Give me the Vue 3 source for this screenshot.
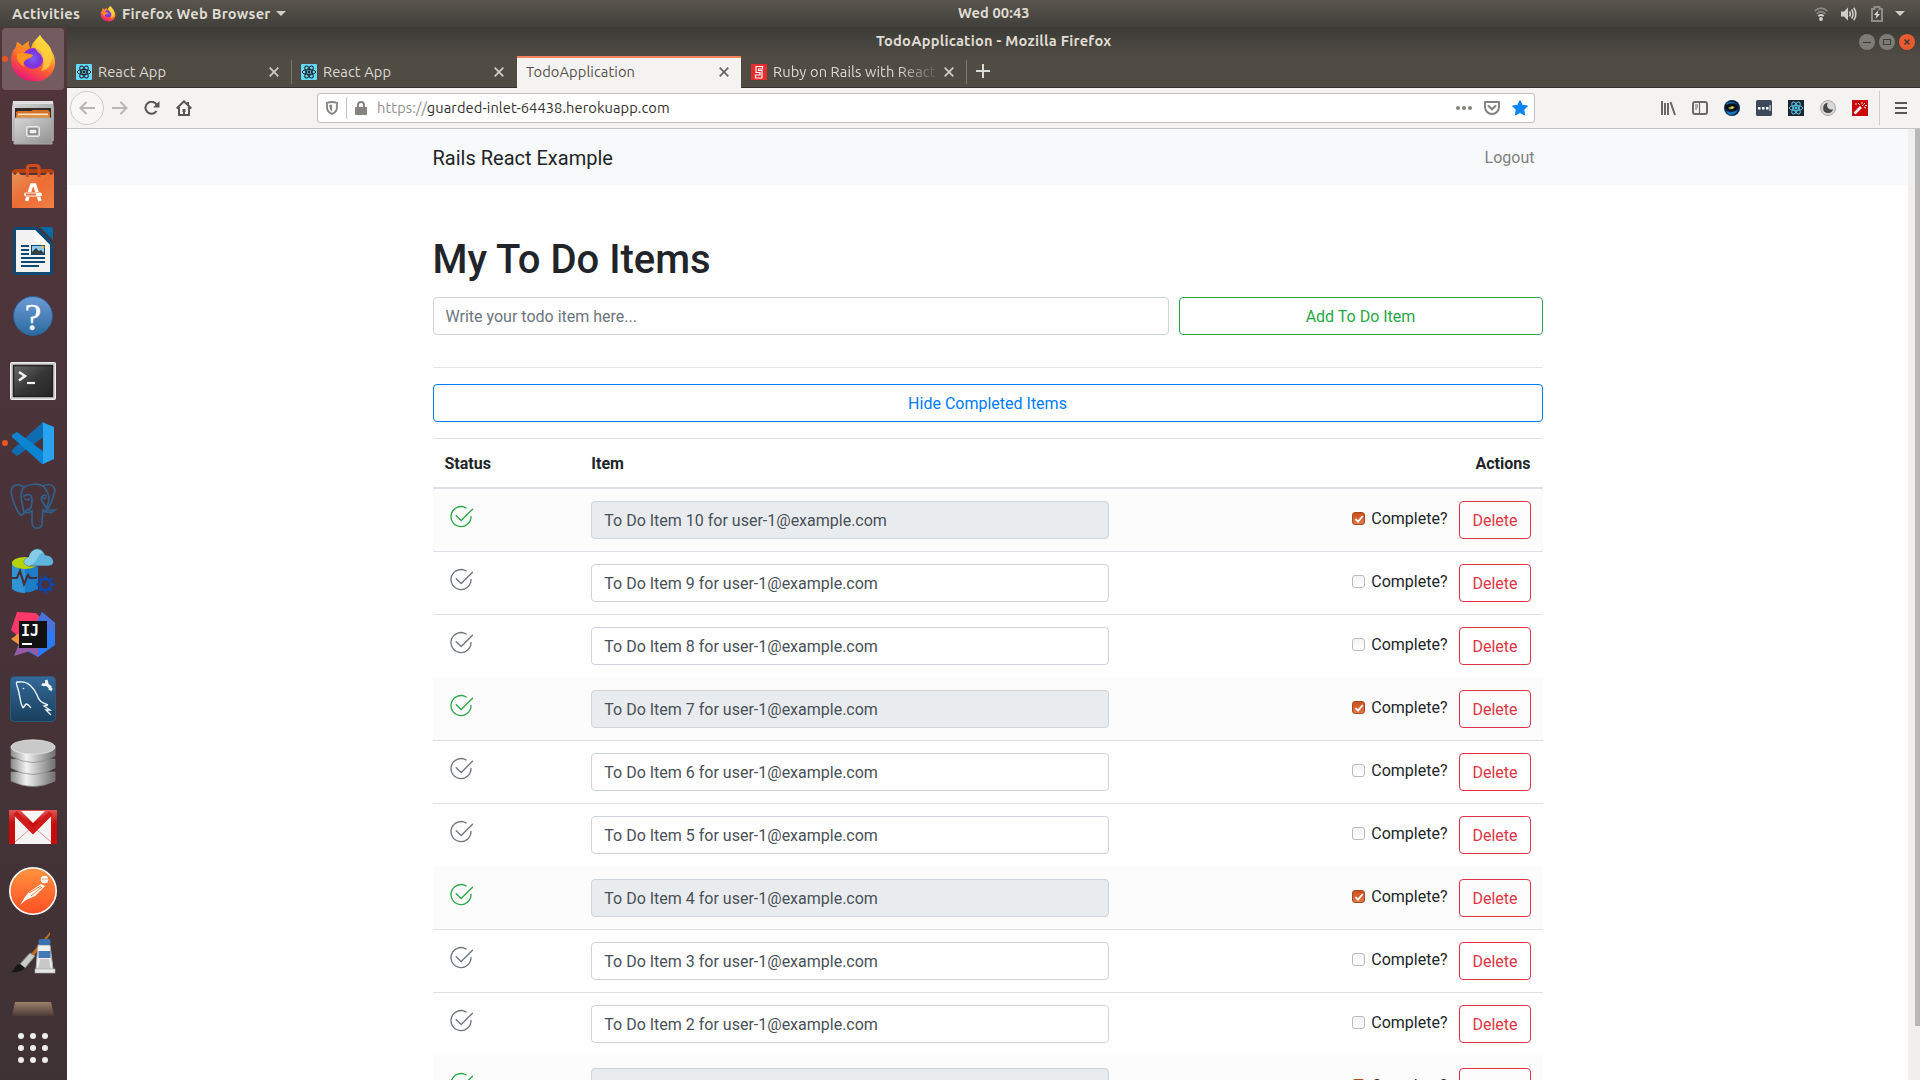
<script setup>
const items = [10, 9, 8, 7, 6, 5, 4, 3, 2, 1].map((n) => ({
  n,
  text: `To Do Item ${n} for user-1@example.com`,
  done: n % 3 === 1,
}))
const teeth = [0, 45, 90, 135, 180, 225, 270, 315]
const dots = [6, 18, 30]
</script>

<template>
  <div class="desktop">
    <svg class="defs" width="0" height="0">
      <defs>
        <linearGradient id="ffBody" x1="0.8" y1="0" x2="0.3" y2="1">
          <stop offset="0" stop-color="#fff44f" /><stop offset="0.35" stop-color="#ffb02e" />
          <stop offset="0.65" stop-color="#ff5a36" /><stop offset="1" stop-color="#e5127c" />
        </linearGradient>
        <radialGradient id="ffGlobe" cx="0.5" cy="0.5" r="0.6">
          <stop offset="0" stop-color="#7b5cf5" /><stop offset="0.6" stop-color="#7a35dc" /><stop offset="1" stop-color="#a32be0" />
        </radialGradient>
        <linearGradient id="metal" x1="0" y1="0" x2="1" y2="1">
          <stop offset="0" stop-color="#d8d8d8" /><stop offset="1" stop-color="#8f8f8f" />
        </linearGradient>
        <linearGradient id="cyl" x1="0" y1="0" x2="1" y2="0">
          <stop offset="0" stop-color="#8b8b8b" /><stop offset="0.35" stop-color="#f2f2f2" /><stop offset="1" stop-color="#6f6f6f" />
        </linearGradient>
        <linearGradient id="bag" x1="0" y1="0" x2="1" y2="1">
          <stop offset="0" stop-color="#e8935a" /><stop offset="0.5" stop-color="#ec6c33" /><stop offset="1" stop-color="#f08048" />
        </linearGradient>
        <linearGradient id="help" x1="0" y1="0" x2="0" y2="1">
          <stop offset="0" stop-color="#6d9bd6" /><stop offset="1" stop-color="#2a6a9e" />
        </linearGradient>
        <linearGradient id="term" x1="0" y1="0" x2="1" y2="1">
          <stop offset="0" stop-color="#6a6a6a" /><stop offset="0.5" stop-color="#373737" /><stop offset="1" stop-color="#242424" />
        </linearGradient>
        <linearGradient id="sql" x1="0" y1="0" x2="0" y2="1">
          <stop offset="0" stop-color="#33699a" /><stop offset="1" stop-color="#193f5c" />
        </linearGradient>
        <linearGradient id="postman" x1="0" y1="0" x2="0" y2="1">
          <stop offset="0" stop-color="#ff9340" /><stop offset="1" stop-color="#ff4f23" />
        </linearGradient>
        <linearGradient id="gmail" x1="0" y1="0" x2="0" y2="1">
          <stop offset="0" stop-color="#e25555" /><stop offset="0.4" stop-color="#c90c0c" /><stop offset="1" stop-color="#cb0a0a" />
        </linearGradient>
        <linearGradient id="tray" x1="0" y1="0" x2="0" y2="1">
          <stop offset="0" stop-color="#9a8068" /><stop offset="1" stop-color="#4c3a38" />
        </linearGradient>
        <symbol id="firefox" viewBox="0 0 48 48">
          <path d="M31 0C34 6 41 9 43 17C46 21 48 30 43 38C38 45 31 47 24 46C12 46 3 38 2 26C2 19 4 15 7 12L8 7C11 8 12 10 13 11L20 6C19 10 20 12 22 14C23 7 27 5 31 0Z" fill="url(#ffBody)" />
          <path d="M7 12L8 7L13 12L20 6C18 12 23 13 24 17L16 27L8 20Z" fill="#ff7d22" opacity=".65" />
          <circle cx="24" cy="23.5" r="10.5" fill="url(#ffGlobe)" />
          <path d="M31 0C35 7 42 10 43 20C43 31 38 35 32 36C36 30 35 22 30 18C25 14 25 8 31 0Z" fill="#ffd53c" opacity=".75" />
          <path d="M8 19C13 17 18 18 24 20C23 23 20 23 17 25C14 27 14 29 16 32C10 30 7 24 8 19Z" fill="#ff9420" />
        </symbol>
        <symbol id="react" viewBox="0 0 16 16">
          <g fill="none" stroke="currentColor" stroke-width="1">
            <ellipse cx="8" cy="8" rx="6.7" ry="2.6" />
            <ellipse cx="8" cy="8" rx="6.7" ry="2.6" transform="rotate(60 8 8)" />
            <ellipse cx="8" cy="8" rx="6.7" ry="2.6" transform="rotate(120 8 8)" />
          </g>
          <circle cx="8" cy="8" r="1.4" fill="currentColor" />
        </symbol>
      </defs>
    </svg>

    <header class="topbar">
      <span class="activities">Activities</span>
      <svg class="topfox" width="16" height="16"><use href="#firefox" /></svg>
      <span class="appname">Firefox Web Browser</span>
      <svg class="caret" width="10" height="5"><path d="M0 0H10L5 5Z" fill="#cfcdc9" /></svg>
      <span class="clock">Wed 00:43</span>
      <div class="tray">
        <svg width="14" height="14" viewBox="0 0 14 14" fill="none" stroke-width="1.7">
          <path d="M.6 4.2Q7-1.8 13.4 4.2" stroke="#8a8882" /><path d="M2.7 6.8Q7 2.6 11.3 6.8" stroke="#8a8882" />
          <path d="M4.3 9.2Q7 6.8 9.7 9.2" stroke="#d6d4d0" /><circle cx="7" cy="12" r="1.9" fill="#d6d4d0" />
        </svg>
        <svg class="vol" width="16" height="14" viewBox="0 0 16 14" fill="none" stroke="#cfcdc9" stroke-width="1.6">
          <path d="M0 4.5H3L7 .5V13.5L3 9.5H0Z" fill="#cfcdc9" stroke="none" />
          <path d="M8.5 4.5Q10 7 8.5 9.5M10.7 2.5Q13.3 7 10.7 11.5M12.8 .8Q16.8 7 12.8 13.2" />
        </svg>
        <svg class="bat" width="12" height="16" viewBox="0 0 12 16">
          <path d="M1 3H3.5V1H8.5V3H11V15H1Z" fill="none" stroke="#8f8d87" stroke-width="2" />
          <path d="M7.5 4L3 9H5.5L4.5 13L9 8H6.5Z" fill="#dddbd7" />
        </svg>
        <svg class="down" width="10" height="5"><path d="M0 0H10L5 5Z" fill="#cfcdc9" /></svg>
      </div>
    </header>

    <div class="body">
      <aside class="dock">
        <div class="dock-active"></div>
        <i class="run run-a"></i><i class="run run-b"></i>
        <svg viewBox="0 0 48 48"><use href="#firefox" /></svg>
        <svg viewBox="0 0 48 48">
          <path d="M4 2H44L45 9V42H3V9Z" fill="url(#metal)" /><path d="M4 2H44V5H4Z" fill="#e1e1e1" />
          <path d="M6 9H42V20H6Z" fill="#302b28" /><path d="M7 13L9 12H22L24 11H39L41 13V19H7Z" fill="#d3722b" /><path d="M9 14.5H39V16H9Z" fill="#fbe7cf" /><path d="M8 16H40V19H8Z" fill="#e0923e" />
          <path d="M5 19H43V45H5Z" fill="url(#metal)" stroke="#a9a9a9" />
          <rect x="17.5" y="27.500" width="13" height="10" rx="1.500" fill="#c9c9c9" stroke="#e9e9e9" /><rect x="20" y="30" width="8" height="5" fill="#f3f3f3" stroke="#555" />
        </svg>
        <svg viewBox="0 0 48 48">
          <path d="M3 8L6 6H42L45 8V10H3Z" fill="#b9410f" /><path d="M3 9L6 12L9 9L12 12H36L39 9L42 12L45 9V45H3Z" fill="url(#bag)" />
          <path d="M18.500 14V5Q18.500 2.500 21.500 2.500H27Q30 2.500 30 5V14" fill="none" stroke="#cf4d1b" stroke-width="3.200" />
          <path d="M17.500 38L22.800 22H25.700L31 38" fill="none" stroke="#fff" stroke-width="3.500" />
          <rect x="14" y="29" width="20" height="5" rx="2.500" fill="#ec6c33" /><rect x="15" y="29.500" width="18" height="4" rx="2" fill="#fff" /><rect x="17" y="30.500" width="10" height="2" fill="#ec6c33" />
        </svg>
        <svg viewBox="0 0 48 48">
          <path d="M7 0H28L44 16V45Q44 48 41 48H7Q4 48 4 45V3Q4 0 7 0Z" fill="#0c4a73" /><path d="M31 0H42Q44 0 44 2V13Z" fill="#0369a3" />
          <path d="M7 3H26L41 18V45H7Z" fill="#f2f2f2" /><path d="M26 3V14Q29 17 41 18Z" fill="#fff" />
          <path d="M12 19H20M12 23H20M12 27H20M12 31H36M12 35H36M12 39H30" stroke="#0c4a73" stroke-width="2" />
          <rect x="22" y="18" width="14" height="10" fill="#0c4a73" /><rect x="23" y="19" width="12" height="8" fill="#8fcbed" /><path d="M23 27V25L27 21L30 24L32 23L35 26V27Z" fill="#333f42" /><circle cx="34" cy="20" r="1.500" fill="#f0c040" />
        </svg>
        <svg viewBox="0 0 48 48">
          <circle cx="24" cy="25" r="19.500" fill="url(#help)" stroke="#2c5f94" />
          <text x="24" y="38.500" text-anchor="middle" class="q">?</text>
        </svg>
        <svg viewBox="0 0 48 48">
          <rect x="1.500" y="7.500" width="45" height="37" rx="1" fill="#d2d2d2" stroke="#f0f0f0" /><rect x="4.500" y="10.500" width="39" height="31" fill="url(#term)" stroke="#222" stroke-width="1.500" />
          <path d="M10 17L16 21L10 25.500" fill="none" stroke="#f3f3f3" stroke-width="2.500" /><path d="M18 28H26" stroke="#f3f3f3" stroke-width="2.200" />
        </svg>
        <svg viewBox="0 0 48 48">
          <path d="M34 3L36 4V17L8 37L3 33V31Z" fill="#0f6cb0" /><path d="M3 16L8 13L35 33V45H33L3 18Z" fill="#0b84d2" /><path d="M33 3L45 8V40L34 45V3Z" fill="#27a3f0" />
        </svg>
        <svg viewBox="0 0 48 48" fill="none" stroke="#31608c" stroke-width="1.700" stroke-linecap="round">
          <path d="M15 4C6-1 0 4 3 13C5 22 10 33 13 32L19 26M15 4C20 1 30 0 34 3C42-1 48 4 45 11C43 19 39 26 36 29M15 4C9 11 14 22 15 30Q20 30 23 28V40C24 47 33 47 33 40L34 27Q41 32 46 27Q40 28 37 25C42 17 40 9 34 3M15 13Q23 9 23 17T20 27M37 12Q31 12 33 18L38 26M16 16Q19 18 20 16M34 15Q36 17 37 14" />
        </svg>
        <svg viewBox="0 1 48 48">
          <path d="M3 16V43Q16 50 29 43V16Z" fill="#1d7cc8" /><path d="M3 16V43Q8 47 16 47V16Z" fill="#2f93d4" /><ellipse cx="16" cy="17" rx="13" ry="6" fill="#b5d20a" />
          <path d="M3 32H8L11 25L15 38L19 29L21 32H28" fill="none" stroke="#42313a" stroke-width="2.200" />
          <path d="M20 20C13 19 14 12 20 11C22 1 33 0 36 9C45 9 48 20 39 20Z" fill="#5db5dc" stroke="#4a353d" stroke-width=".6" /><path d="M20 20C13 19 14 12 20 11C22 3 30 1 34 7C27 8 31 15 20 20Z" fill="#86cde8" />
          <g transform="translate(36.500 38.500)" stroke="#0b47ae" fill="none"><circle r="5.500" stroke-width="2.300" /><path v-for="a in teeth" :key="a" d="M0-6V-9" stroke-width="2.600" :transform="`rotate(${a})`" /></g>
        </svg>
        <svg viewBox="0 0 48 48">
          <path d="M8 1L27 2L38 13L12 28L2 19Z" fill="#fe3868" /><path d="M2 28L13 20V35L9 33Z" fill="#f6943b" /><path d="M33 1L46 12V34L29 46L18 40L27 12Z" fill="#2b7af3" /><path d="M33 1L46 12L42 22L30 10Z" fill="#4b72dc" /><path d="M5 45L11 30L29 34V46L21 40Z" fill="#955ba5" />
          <rect x="10" y="10" width="28" height="27" fill="#111" /><text x="12" y="25" class="ij">IJ</text><path d="M13 33H23" stroke="#fff" stroke-width="2" />
        </svg>
        <svg viewBox="0 0 48 48">
          <rect x="1.500" y="1.500" width="45" height="45" rx="4" fill="url(#sql)" stroke="#2e5878" />
          <path d="M14 33L12 28L10 18C9 12 6 8 8 7L11 7C19 6 25 13 28 20C30 27 34 28 39 30M39 30L35 31L41 35L37 35L42 40M14 33L17 29Q19 29 22 33" fill="none" stroke="#e9f3fa" stroke-width="1.400" />
          <circle cx="14.500" cy="13.500" r=".8" fill="#fff" /><path d="M36 8L42 13" stroke="#f0f5f8" stroke-width="3" /><path d="M33 9Q36 11 38 8L37 5M40 13L43 15" fill="none" stroke="#f0f5f8" stroke-width="2.800" />
        </svg>
        <svg viewBox="0 0 48 48">
          <g stroke="#858585" stroke-width=".7">
            <path d="M2 33V42Q24 53 46 42V33Z" fill="url(#cyl)" /><path d="M2 20V29Q24 42 46 29V20Z" fill="url(#cyl)" /><path d="M2 7V17Q24 30 46 17V7Z" fill="url(#cyl)" /><ellipse cx="24" cy="8" rx="22" ry="7.200" fill="#c9c9c9" stroke="#ededed" />
          </g>
        </svg>
        <svg viewBox="0 0 48 48">
          <rect y="7" width="48" height="34" fill="url(#gmail)" /><path d="M6 12L24 29L42 12V41H6Z" fill="#f3f3f3" /><path d="M12 8H36L24 20Z" fill="#f6f6f6" /><path d="M6 39L21 26M42 39L27 26" stroke="#df9090" stroke-width="1" /><path d="M6 10L24 28L42 10" fill="none" stroke="#cf1b1b" stroke-width="5" />
        </svg>
        <svg viewBox="0 0 48 48">
          <circle cx="24" cy="24" r="23.200" fill="url(#postman)" stroke="#fff" stroke-width="1.600" /><circle cx="35.500" cy="12.500" r="3.800" fill="#fff" /><path d="M32 17L36 19L26 29L17 33L11 38L16 30L20 25Z" fill="#fff" /><path d="M20 26L32 19M22 29L33 20" stroke="#f47b3b" stroke-width="1" /><path d="M33 12H39" stroke="#f0a070" />
        </svg>
        <svg viewBox="0 0 48 48">
          <path d="M41 1L22 23L24 26L41 4Z" fill="#c06b1c" /><path d="M21 22L26 25L16 37L11 33Z" fill="#c9cbc9" stroke="#858985" /><path d="M11 33L16 37Q12 42 2 41Q5 39 6 36Q8 33 11 33Z" fill="#171717" />
          <path d="M29 14H41L44 38H27Z" fill="#eee" stroke="#aaa" /><path d="M31 28H40L42 38H29Z" fill="#c8c8c8" /><rect x="29.500" y="8" width="12" height="6" rx="2" fill="#3d6fae" /><rect x="29.500" y="20" width="12" height="7" fill="#4279b6" /><rect x="26" y="38" width="20" height="4" fill="#e6e6e6" stroke="#aaa" stroke-width=".6" />
        </svg>
        <svg class="stub" viewBox="0 0 48 14"><path d="M6 0H42L45 14H3Z" fill="url(#tray)" /></svg>
        <svg class="apps" width="36" height="36" viewBox="0 0 36 36">
          <template v-for="y in dots" :key="y"><circle v-for="x in dots" :key="x" :cx="x" :cy="y" r="3" fill="#eeeeec" /></template>
        </svg>
      </aside>

      <section class="window">
        <div class="titlebar">
          <span class="title">TodoApplication - Mozilla Firefox</span>
          <div class="winbtns">
            <svg viewBox="0 0 16 16"><circle cx="8" cy="8" r="8" fill="#7c7b75" /><path d="M4 8.500H12" stroke="#3d3c38" /></svg>
            <svg viewBox="0 0 16 16"><circle cx="8" cy="8" r="8" fill="#7c7b75" /><rect x="4.500" y="5.500" width="7" height="5" fill="none" stroke="#3d3c38" /></svg>
            <svg viewBox="0 0 16 16"><circle cx="8" cy="8" r="8" fill="#e95b2f" /><path d="M5.500 5.500L10.500 10.500M10.500 5.500L5.500 10.500" stroke="#3d3c38" stroke-width="1.500" /></svg>
          </div>
        </div>

        <nav class="tabs">
          <div v-for="t in 2" :key="t" class="tab" :class="{ sep: t === 1 }">
            <span class="fav"><svg width="16" height="16"><use href="#react" /></svg></span>
            <span class="label">React App</span>
            <svg class="x" viewBox="0 0 10 10"><path d="M.7 .7L9.300 9.300M9.300 .7L.7 9.300" /></svg>
          </div>
          <div class="tab active">
            <span class="label">TodoApplication</span>
            <svg class="x" viewBox="0 0 10 10"><path d="M.7 .7L9.300 9.300M9.300 .7L.7 9.300" /></svg>
          </div>
          <div class="tab sep ruby">
            <svg width="16" height="16" viewBox="0 0 16 16"><rect width="16" height="16" fill="#e52d2d" /><path d="M11.500 5V2.500H5V8.500H9V11H4.500V14H11V6.500H7.500V5Z" fill="none" stroke="#fff" stroke-width="1.200" /></svg>
            <span class="label fade">Ruby on Rails with React</span>
            <svg class="x" viewBox="0 0 10 10"><path d="M.7 .7L9.300 9.300M9.300 .7L.7 9.300" /></svg>
          </div>
          <svg class="plus" width="14" height="14"><path d="M7 0V14M0 7H14" stroke="#dcdad5" stroke-width="2" /></svg>
        </nav>

        <div class="toolbar">
          <span class="back"><svg width="16" height="14" viewBox="0 0 16 14"><path d="M16 7H1.500M7.500 1L1.500 7L7.500 13" fill="none" stroke="#b7b6b4" stroke-width="2" /></svg></span>
          <svg class="fwd" width="16" height="14" viewBox="0 0 16 14"><path d="M0 7H14.500M8.500 1L14.500 7L8.500 13" fill="none" stroke="#b7b6b4" stroke-width="2" /></svg>
          <svg class="reload" width="16" height="14" viewBox="0 0 16 14"><path d="M13 4.500A6 6 0 1 0 12.500 10" fill="none" stroke="#585756" stroke-width="2.100" /><path d="M15.500 0V6.500H9Z" fill="#585756" /></svg>
          <svg class="home" width="16" height="16" viewBox="0 0 16 16"><path d="M.7 8.500L8 1.300L15.300 8.500M3 7V15H13V7" fill="none" stroke="#585756" stroke-width="2" /><path d="M6.500 9H9.500V12H6.500ZM7 12H9V15H7Z" fill="#585756" /><path d="M11 2H13V5H11Z" fill="#585756" /></svg>
          <div class="url">
            <svg width="12" height="14" viewBox="0 0 12 14"><path d="M1 1.800Q6 .2 11 1.800V6Q11 11 6 13Q1 11 1 6Z" fill="none" stroke="#84837f" stroke-width="1.800" /><path d="M6 3.500V10.500Q3.500 9 3.300 4Z" fill="#84837f" /></svg>
            <i class="usep"></i>
            <svg width="12" height="14" viewBox="0 0 12 14"><rect y="6" width="12" height="8" rx="1" fill="#84837f" /><path d="M3 7V4Q3 1 6 1T9 4V7" fill="none" stroke="#84837f" stroke-width="2" /></svg>
            <span class="addr"><span>https://</span>guarded-inlet-64438.herokuapp.com</span>
            <svg class="more" width="16" height="4"><circle cx="2" cy="2" r="2" /><circle cx="8" cy="2" r="2" /><circle cx="14" cy="2" r="2" /></svg>
            <svg class="pocket" width="16" height="14" viewBox="0 0 16 14"><path d="M1 1H15V6A7 7 0 0 1 1 6Z" fill="none" stroke="#84837f" stroke-width="2" stroke-linejoin="round" /><path d="M4.500 5L8 8.300L11.500 5" fill="none" stroke="#84837f" stroke-width="2" stroke-linecap="round" /></svg>
            <svg class="star" width="16" height="16" viewBox="0 0 16 16"><path d="M8 .7L10.300 5.300L15.500 6L11.800 9.700L12.600 15L8 12.500L3.400 15L4.200 9.700L.5 6L5.700 5.300Z" fill="#0a84ff" stroke="#0a84ff" stroke-linejoin="round" /></svg>
          </div>
          <div class="ext">
            <svg viewBox="0 0 16 16" fill="none" stroke="#6a6967" stroke-width="2"><path d="M2 1V15M5 3V15M8 3V15" /><path d="M10.500 2L15 15" /></svg>
            <svg viewBox="0 0 16 16" fill="none" stroke="#6a6967" stroke-width="2"><rect x="1" y="2" width="14" height="12" rx="2" /><path d="M7.500 2V14" stroke-width="1.200" /><path d="M3 5H6M3 7H6M3 9H5" stroke-width="1" /></svg>
            <svg viewBox="0 0 16 16"><circle cx="8" cy="8" r="8" fill="#0a2448" /><path d="M1 4Q7 2 14 6L12 10Q7 12 2 9Z" fill="#0a0f14" /><path d="M2 3Q8 0 13 4Q8 2 2 5Z" fill="#116096" /><path d="M4 8Q8 5 11 7Q9 10 5.500 9Z" fill="#90a83c" /><circle cx="8" cy="7.500" r="1" fill="#e3e66c" /><path d="M1.500 10.500Q7 14 14 10Q10 17 4 14Z" fill="#1678ba" /></svg>
            <svg viewBox="0 0 16 16"><rect width="16" height="16" rx="1.500" fill="#3d4a5a" /><path d="M2 7H4.500V9.500H2ZM6 7H8.500V9.500H6ZM10 7H12.500V9.500H10ZM13.500 5H14.500V11H13.500Z" fill="#fff" /></svg>
            <svg class="dark-react" viewBox="0 0 16 16"><rect width="16" height="16" fill="#20232a" /><use href="#react" /></svg>
            <svg viewBox="0 0 16 16"><circle cx="8" cy="8" r="7.500" fill="#d8d8d8" stroke="#a9a9a9" /><path d="M8 3A5 5 0 1 0 13 9A4 4 0 0 1 8 3Z" fill="#484848" /></svg>
            <svg viewBox="0 0 16 16"><rect width="16" height="16" fill="#c90909" /><path d="M2.500 13.500L9 7" stroke="#fff" stroke-width="2.600" /><path d="M10 6L11 5M6 3L8 5M10 2V4M13 3L11.500 4.500M12 7L14 8M13 5.500H15M3 4H5" stroke="#ffdada" stroke-width="1" /></svg>
          </div>
          <i class="msep"></i>
          <svg class="burger" width="12" height="12"><path d="M0 1H12M0 6H12M0 11H12" stroke="#585756" stroke-width="2" /></svg>
        </div>

        <div class="viewport">
          <main class="page">
            <div class="navbar"><span class="brand">Rails React Example</span><span class="logout">Logout</span></div>
            <div class="container">
              <h1>My To Do Items</h1>
              <div class="form"><div class="field placeholder">Write your todo item here...</div><div class="btn green">Add To Do Item</div></div>
              <div class="hr"></div>
              <div class="btn blue">Hide Completed Items</div>
              <div class="table">
                <div class="row head"><span>Status</span><span>Item</span><span class="right">Actions</span></div>
                <div v-for="it in items" :key="it.n" class="row" :class="{ done: it.done }">
                  <div class="status">
                    <svg width="24" height="24" viewBox="0 0 24 24" fill="none" stroke="currentColor" stroke-width="1.350" stroke-linecap="round" stroke-linejoin="round"><path d="M16.200 3A10 10 0 1 0 21 11.500" /><path d="M6.200 10.700L11.200 15.500L22.500 4.200" /></svg>
                  </div>
                  <div class="cell"><div class="field">{{ it.text }}</div></div>
                  <div class="actions">
                    <div class="check"><span class="box"><svg v-if="it.done" width="12" height="12" viewBox="0 0 12 12"><path d="M2.500 6L5 8.700L9.800 3" fill="none" stroke="#fff" stroke-width="1.800" /></svg></span><span class="word">Complete?</span></div>
                    <div class="btn red">Delete</div>
                  </div>
                </div>
              </div>
            </div>
          </main>
          <div class="scroll"><div class="thumb"></div></div>
        </div>
      </section>
    </div>
  </div>
</template>

<style>
body { margin: 0; overflow: hidden; }
</style>

<style scoped>
* { box-sizing: border-box; }
svg { display: block; flex: none; }
.defs { position: absolute; }
.desktop { width: 1920px; height: 1080px; overflow: hidden; display: flex; flex-direction: column; background: #fff; font-family: Ubuntu, "Noto Sans", sans-serif; font-size: 14.67px; }
.topbar { position: relative; height: 27px; flex: none; display: flex; align-items: center; padding-left: 12px; background: linear-gradient(#5a564d, #403f3a); color: #dfdbd2; font-weight: 600; white-space: nowrap; }
.activities { width: 69px; letter-spacing: 0.3px; }
.topfox { margin-left: 19px; }
.appname { margin-left: 6px; width: 149px; letter-spacing: 0.25px; }
.caret { margin-left: 5px; }
.clock { position: absolute; left: 958px; top: 0; line-height: 26px; letter-spacing: 0.1px; }
.tray { margin-left: auto; display: flex; align-items: center; padding-right: 15px; }
.vol { margin-left: 13px; }
.bat { margin-left: 14px; }
.down { margin-left: 12px; }
.body { display: flex; flex: 1; min-height: 0; }
.dock { position: relative; width: 67px; flex: none; display: flex; flex-direction: column; align-items: center; gap: 16px; padding: 8px 1px 0 0; background: linear-gradient(#51363b, #483339 50%, #3f3235); }
.dock > svg { position: relative; width: 48px; height: 48px; }
.dock > .stub { height: 14px; margin-top: 7px; }
.dock > .apps { width: 36px; height: 36px; margin-top: -2px; }
.dock-active { position: absolute; left: 2px; top: 1px; width: 62px; height: 62px; border-radius: 4px; background: #735b60; }
.run { position: absolute; left: 2px; width: 6px; height: 6px; border-radius: 50%; background: #e95420; }
.run-a { top: 29px; }
.run-b { top: 413px; }
.q { font: 38px "Liberation Serif", serif; fill: #fff; stroke: #fff; stroke-width: .3; }
.ij { font: bold 15px "DejaVu Sans Mono", monospace; fill: #fff; }
.window { flex: 1; display: flex; flex-direction: column; min-width: 0; background: #504c44; }
.titlebar { position: relative; height: 29px; flex: none; background: linear-gradient(#3b3a36, #504c44); display: flex; align-items: center; }
.title { margin-left: 809px; font-weight: 600; color: #dfdbd2; line-height: 26px; height: 28px; white-space: nowrap; letter-spacing: 0.24px; }
.winbtns { margin-left: auto; display: flex; gap: 4px; padding-right: 5px; }
.winbtns svg { width: 16px; height: 16px; }
.tabs { height: 32px; flex: none; display: flex; align-items: stretch; color: #dcd9d2; border-bottom: 1px solid #33322e; }
.tab { position: relative; width: 225px; display: flex; align-items: center; padding: 0 13px 0 9px; }
.tab.sep::after { content: ""; position: absolute; right: 0; top: 4px; bottom: 3px; width: 1px; background: #7b7871; }
.label { flex: 1; margin-left: 6px; white-space: nowrap; overflow: hidden; line-height: 20px; letter-spacing: 0.08px; }
.fav { width: 16px; height: 16px; background: #61dafb; color: #20232a; border-radius: 1px; }
.x { width: 10px; height: 10px; fill: none; stroke: #cfccc5; stroke-width: 1.700; }
.tab.active { width: 224px; background: #f4f3f1; color: #55524d; border-top: 2px solid #f6845b; margin-bottom: -1px; padding: 0 12px 2px 3px; }
.tab.active .x { stroke: #66645f; }
.label.fade { flex: none; width: 163px; margin-right: 8px; letter-spacing: 0.1px; -webkit-mask-image: linear-gradient(90deg, #000 125px, transparent 168px); }
.ruby { width: 226px; padding-left: 10px; padding-right: 0; }
.plus { margin: 8px 0 0 9px; }
.toolbar { height: 41px; flex: none; display: flex; align-items: center; background: #f4f3f1; border-bottom: 1px solid #c6c4c1; padding-left: 3px; }
.back { width: 34px; height: 34px; border: 1px solid #cfcdca; border-radius: 50%; display: grid; place-items: center; background: #f8f7f6; }
.fwd { margin-left: 8px; }
.reload { margin-left: 16px; }
.home { margin-left: 16px; }
.url { width: 1218px; height: 30px; margin-left: 125px; border: 1px solid #c2c0bd; border-radius: 3px; background: #fff; display: flex; align-items: center; padding: 0 6px 0 8px; }
.usep { width: 1px; height: 22px; background: #c5c4c2; margin: 0 8px 0 8px; }
.addr { flex: 1; margin-left: 10px; padding-bottom: 1px; color: #33312e; letter-spacing: 0.08px; }
.addr span { color: #908f8c; }
.more { fill: #84837f; }
.pocket, .star { margin-left: 12px; }
.ext { display: flex; gap: 16px; margin-left: 125px; }
.ext svg { width: 16px; height: 16px; }
.dark-react { color: #55c8ea; }
.msep { width: 1px; height: 34px; background: #cfcdcb; margin: 0 15px 0 11px; }
.viewport { flex: 1; display: flex; min-height: 0; background: #fff; }
.page { flex: 1; height: 951px; overflow: hidden; font-family: Roboto, sans-serif; font-size: 16px; line-height: 24px; color: #212529; }
.scroll { width: 12px; background: #f0efee; padding-left: 7px; }
.thumb { height: 897px; background: #b9b8b7; }
.navbar { height: 56px; background: #f8f9fa; display: flex; align-items: center; justify-content: space-between; padding: 2px 373.5px 0 365.5px; }
.brand { font-size: 20px; line-height: 30px; }
.logout { color: #808182; }
.container { width: 1110px; margin: 51px 0 0 365.5px; }
h1 { margin: 0 0 13px; font-size: 40px; line-height: 48px; font-weight: 500; }
.form { display: flex; gap: 10px; }
.field { height: 38px; border: 1px solid #ced4da; border-radius: 4px; background: #fff; color: #495057; padding: 7px 12px 5px; white-space: nowrap; }
.form .field { width: 736px; }
.form .placeholder { color: #6c757d; }
.btn { height: 38px; border: 1px solid; border-radius: 4px; padding: 7px 12px 5px; text-align: center; white-space: nowrap; }
.form .btn { flex: 1; }
.green { color: #28a745; }
.blue { color: #007bff; }
.red { color: #dc3545; width: 72px; }
.hr { height: 1px; background: #e5e5e5; margin: 32px 0 16px; }
.table { margin-top: 16px; }
.row { display: grid; grid-template-columns: 146.8px 541.7px 421.5px; height: 63px; border-top: 1px solid #dee2e6; }
.row.head { height: 51px; border-bottom: 2px solid #dee2e6; font-weight: 700; padding-top: 13px; }
.head span { padding: 0 12px; }
.right { text-align: right; }
.row.head + .row { height: 62px; border-top: 0; }
.row.done { background: #fcfcfc; border-top-color: #fcfcfc; }
.status { padding: 16px 0 0 17.5px; color: #6c757d; }
.done .status { color: #28a745; }
.cell { padding: 12px; }
.done .field { background: #e9ecef; }
.actions { display: flex; justify-content: flex-end; padding: 12px 11.5px 12px 0; }
.check { display: flex; align-items: center; height: 24px; margin: 5px 11.5px 0 0; gap: 6px; }
.word { padding-top: 2px; }
.box { width: 13px; height: 13px; border: 1px solid #bdbbb8; border-radius: 3px; background: linear-gradient(#f3f3f3, #fff); display: grid; place-items: center; }
.done .box { border-color: #a84a20; background: linear-gradient(#cb4f1c, #e17a4a); }
</style>
